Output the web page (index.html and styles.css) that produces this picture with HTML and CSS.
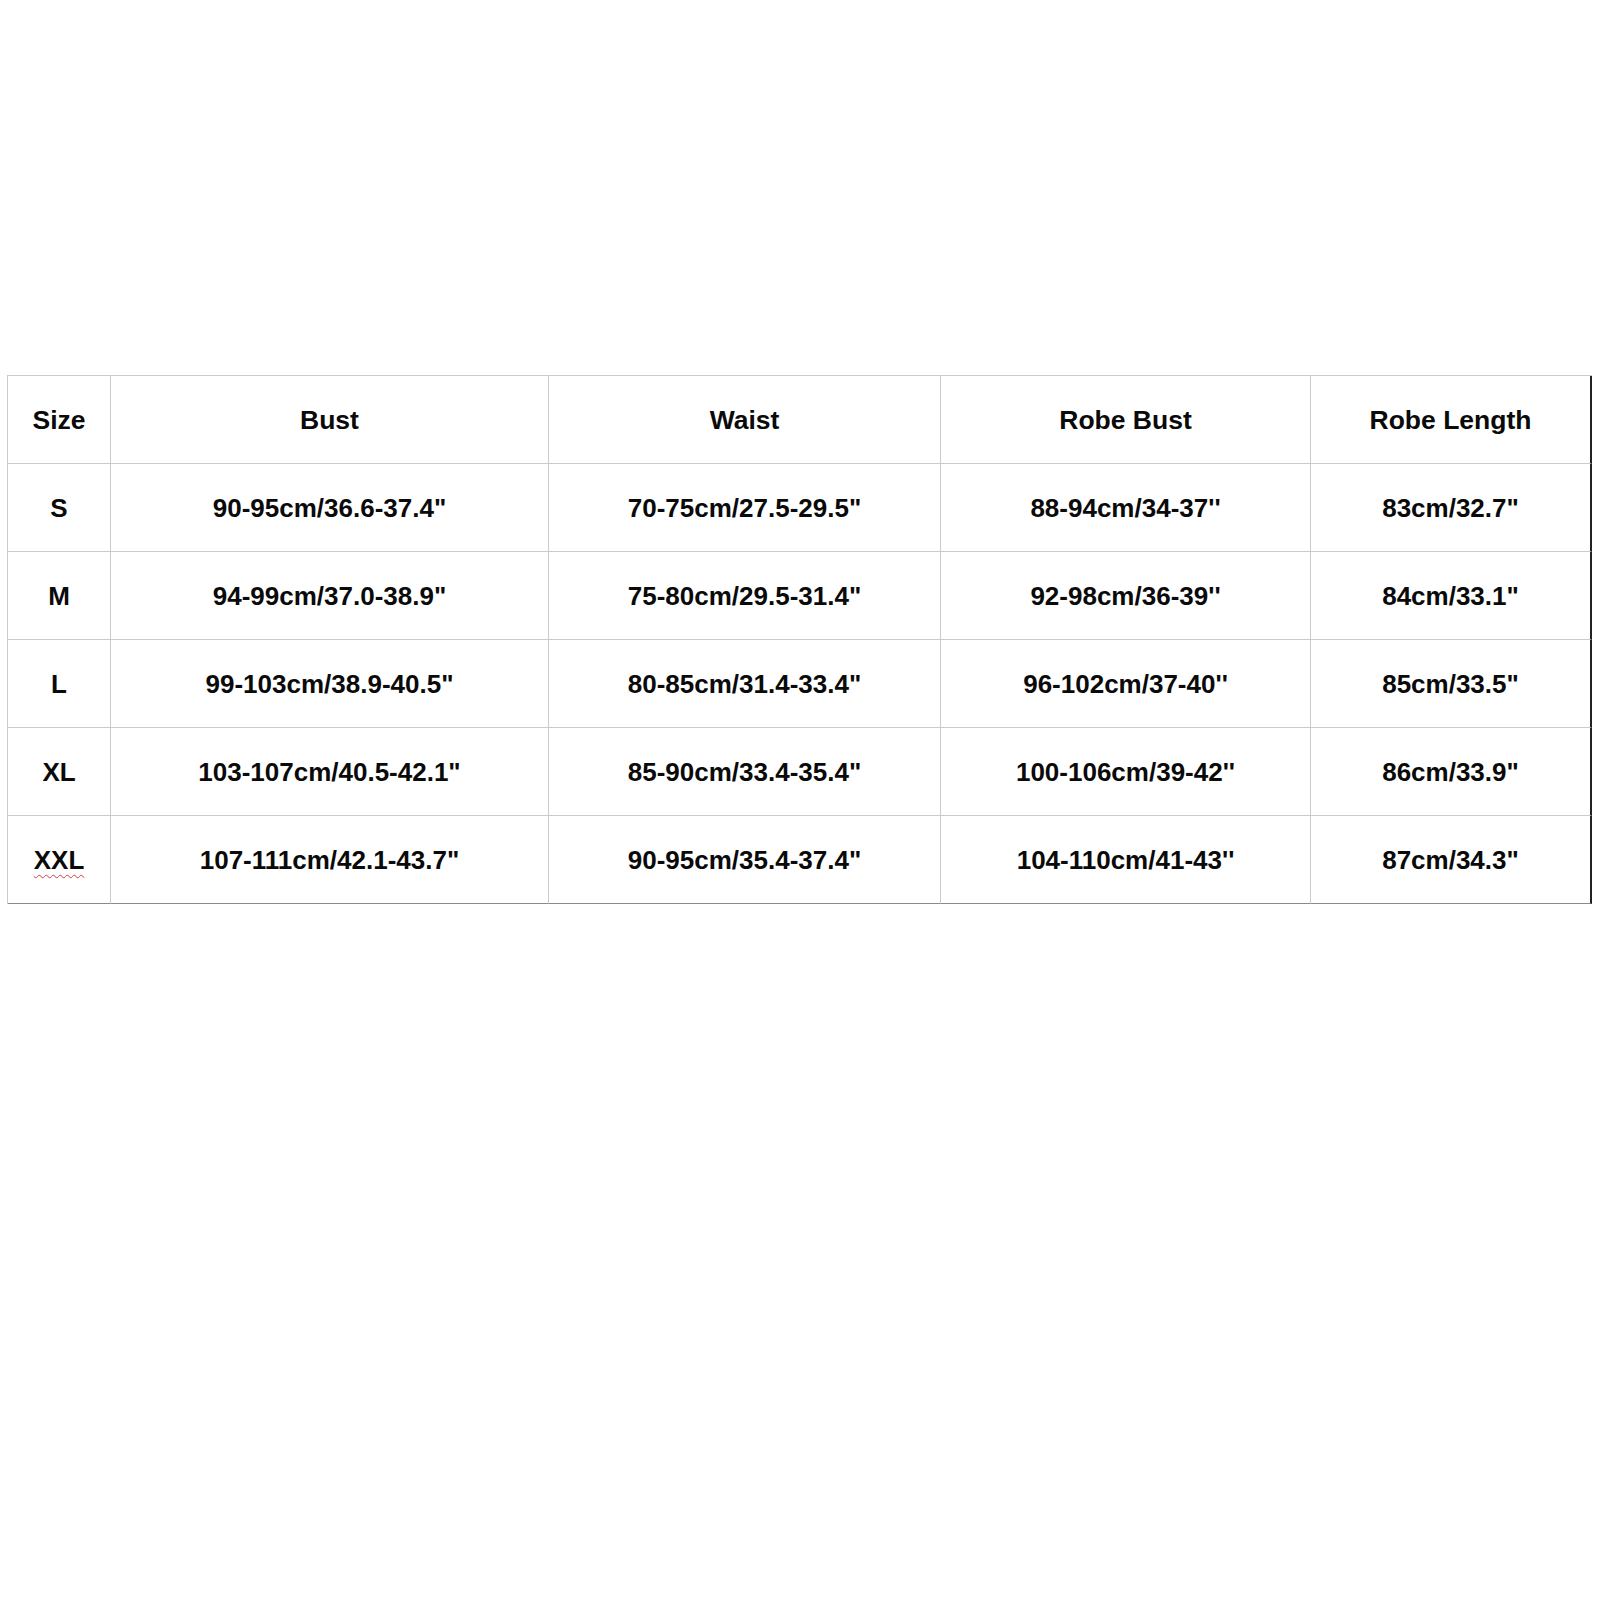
FILE: index.html
```html
<!DOCTYPE html>
<html>
<head>
<meta charset="utf-8">
<link rel="stylesheet" href="styles.css">
</head>
<body>
<div class="page">
<table class="sizes">
<thead>
<tr>
<th class="c1">Size</th>
<th class="c2">Bust</th>
<th class="c3">Waist</th>
<th class="c4">Robe Bust</th>
<th class="c5">Robe Length</th>
</tr>
</thead>
<tbody>
<tr><td>S</td><td>90-95cm/36.6-37.4"</td><td>70-75cm/27.5-29.5"</td><td>88-94cm/34-37''</td><td>83cm/32.7"</td></tr>
<tr><td>M</td><td>94-99cm/37.0-38.9"</td><td>75-80cm/29.5-31.4"</td><td>92-98cm/36-39''</td><td>84cm/33.1"</td></tr>
<tr><td>L</td><td>99-103cm/38.9-40.5"</td><td>80-85cm/31.4-33.4"</td><td>96-102cm/37-40''</td><td>85cm/33.5"</td></tr>
<tr><td>XL</td><td>103-107cm/40.5-42.1"</td><td>85-90cm/33.4-35.4"</td><td>100-106cm/39-42''</td><td>86cm/33.9"</td></tr>
<tr class="last"><td><span class="spell">XXL</span></td><td>107-111cm/42.1-43.7"</td><td>90-95cm/35.4-37.4"</td><td>104-110cm/41-43''</td><td>87cm/34.3"</td></tr>
</tbody>
</table>
</div>
</body>
</html>
```
FILE: styles.css
```css
html, body {
  margin: 0;
  padding: 0;
  background: #ffffff;
}
.page {
  width: 1600px;
  height: 1600px;
  padding: 375px 0 0 7px;
  box-sizing: border-box;
}
.sizes {
  border-collapse: separate;
  border-spacing: 0;
  table-layout: fixed;
  width: 1585px;
  border-top: 1px solid #cbcbcb;
  border-left: 1px solid #cbcbcb;
  font-family: "Liberation Sans", Arial, sans-serif;
  font-weight: bold;
  font-size: 26px;
  color: #0a0a0a;
}
.sizes th, .sizes td {
  box-sizing: border-box;
  height: 88px;
  padding: 2px 0 0 0;
  text-align: center;
  vertical-align: middle;
  font-weight: bold;
  border-right: 1px solid #cbcbcb;
  border-bottom: 1px solid #cbcbcb;
  white-space: nowrap;
}
.sizes th {
  font-size: 26.5px;
}
.sizes th:last-child, .sizes td:last-child {
  border-right: 2px solid #222222;
}
.sizes tr.last td {
  border-bottom: 1px solid #8a8a8a;
}
.c1 { width: 103px; }
.c2 { width: 438px; }
.c3 { width: 392px; }
.c4 { width: 370px; }
.c5 { width: 281px; }
.spell {
  text-decoration: underline wavy #d04040;
  text-decoration-thickness: 1px;
  text-underline-offset: 5px;
}
```
